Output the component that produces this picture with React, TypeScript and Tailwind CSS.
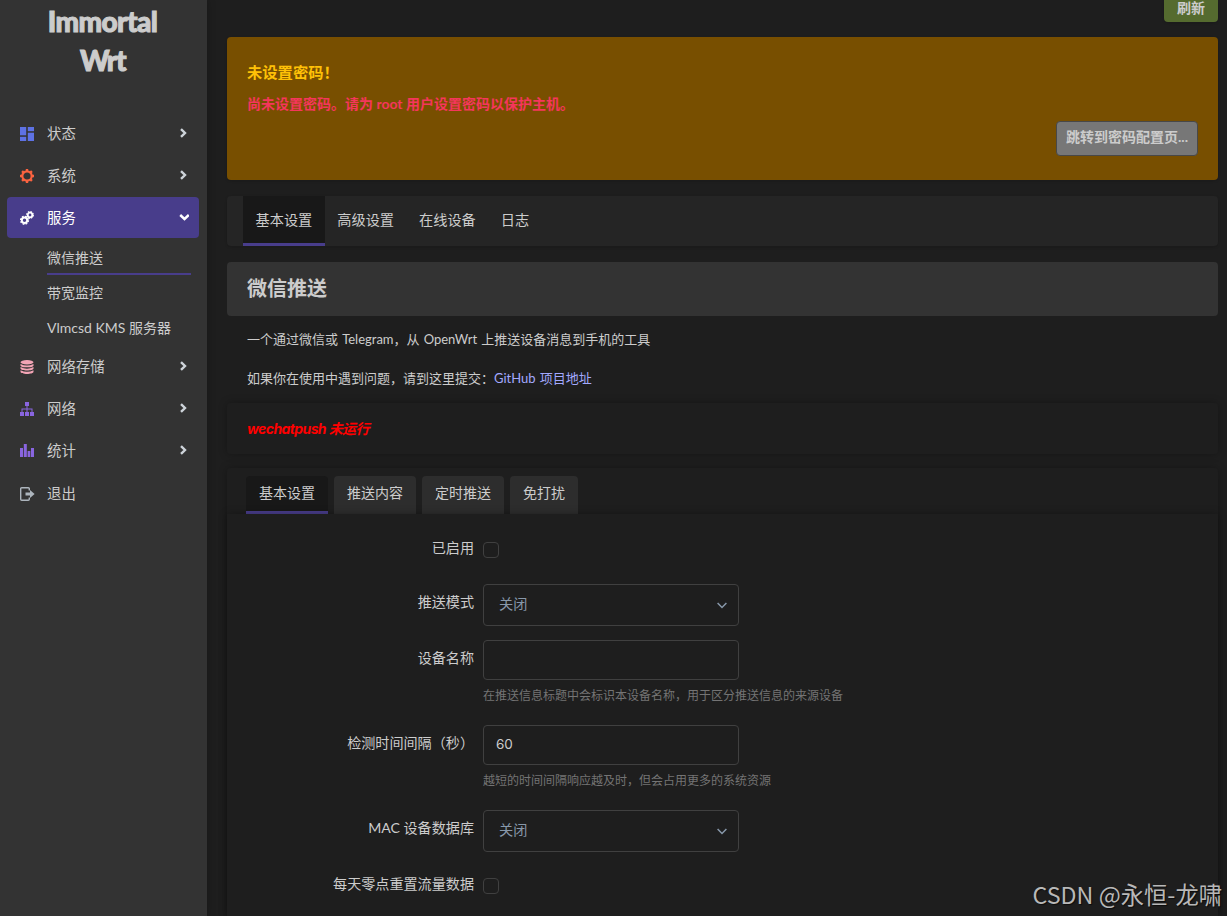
import type { ReactNode } from "react"

function DashboardIcon() {
  return (
    <svg width="14" height="14" viewBox="0 0 14 14" fill="#5e72e4">
      <rect width="6.2" height="8.3" />
      <rect x="7.8" width="6.2" height="4.2" />
      <rect y="9.8" width="6.2" height="4.2" />
      <rect x="7.8" y="5.7" width="6.2" height="8.3" />
    </svg>
  )
}

function GearIcon() {
  return (
    <svg width="14" height="14" viewBox="0 0 14 14" fill="none" stroke="#fb6340">
      <circle cx="7" cy="7" r="4.7" strokeWidth="2.2" />
      <path
        d="M7 0v2M7 12v2M0 7h2M12 7h2M2.05 2.05l1.4 1.4M10.55 10.55l1.4 1.4M2.05 11.95l1.4-1.4M10.55 3.45l1.4-1.4"
        strokeWidth="2.4"
      />
    </svg>
  )
}

function ServicesIcon() {
  return (
    <svg width="14" height="14" viewBox="0 0 14 14" fill="none" stroke="#fff">
      <circle cx="4.5" cy="9.3" r="2.7" strokeWidth="2" />
      <circle cx="4.5" cy="9.3" r="4" strokeWidth="1.2" strokeDasharray="1.8 1.34" />
      <circle cx="10" cy="4" r="2.3" strokeWidth="1.8" />
      <circle cx="10" cy="4" r="3.4" strokeWidth="1.1" strokeDasharray="1.6 1.07" />
    </svg>
  )
}

function DatabaseIcon() {
  return (
    <svg width="14" height="14" viewBox="0 0 14 14" fill="#f3a4b5">
      <ellipse cx="7" cy="2.2" rx="6.5" ry="2.2" />
      <path d="M.5 3.9Q7 7 13.5 3.9v1.5C13.5 8 .5 8 .5 5.4z" />
      <path d="M.5 7.1Q7 10.2 13.5 7.1v1.5C13.5 11.2 .5 11.2 .5 8.6z" />
      <path d="M.5 10.3Q7 13.4 13.5 10.3v1.5C13.5 14.7 .5 14.7 .5 11.8z" />
    </svg>
  )
}

function NetworkIcon() {
  return (
    <svg width="14" height="14" viewBox="0 0 14 14" fill="#8965e0">
      <rect x="5" width="4" height="4" />
      <path d="M6.5 4h1v2.5H12.5V10h-1V7.5h-4V10h-1V7.5h-4V10h-1V6.5H6.5z" />
      <rect y="10" width="4" height="4" />
      <rect x="5" y="10" width="4" height="4" />
      <rect x="10" y="10" width="4" height="4" />
    </svg>
  )
}

function StatsIcon() {
  return (
    <svg width="14" height="14" viewBox="0 0 14 14" fill="#8965e0">
      <rect y="4" width="3" height="9" />
      <rect x="3.8" width="3" height="13" />
      <rect x="7.6" y="7" width="2.7" height="6" />
      <rect x="11" y="4" width="3" height="9" />
    </svg>
  )
}

function LogoutIcon() {
  return (
    <svg width="15" height="14" viewBox="0 0 15 14" fill="none" stroke="#adb5bd" strokeWidth="1.4">
      <path d="M9.3 3.6V1.7Q9.3.7 8.3.7H1.7Q.7.7.7 1.7v10.6q0 1 1 1h6.6q1 0 1-1v-1.9" />
      <path d="M5.5 5.5H10V3L14.6 7 10 11V8.5H5.5z" fill="#adb5bd" stroke="none" />
    </svg>
  )
}

function Caret({ open = false }: { open?: boolean }) {
  return (
    <svg width="10" height="10" viewBox="0 0 10 10" fill="none" stroke={open ? "#fff" : "#ced4da"} strokeWidth="2.4">
      {open ? <path d="M1.2 3 5.5 7 9.8 3" /> : <path d="M2 1.1 6 5 2 8.9" />}
    </svg>
  )
}

type MenuItem = { label: string; icon: ReactNode; children?: string[]; leaf?: boolean }

const menu: MenuItem[] = [
  { label: "状态", icon: <DashboardIcon /> },
  { label: "系统", icon: <GearIcon /> },
  {
    label: "服务",
    icon: <ServicesIcon />,
    children: ["微信推送", "带宽监控", "Vlmcsd KMS 服务器"],
  },
  { label: "网络存储", icon: <DatabaseIcon /> },
  { label: "网络", icon: <NetworkIcon /> },
  { label: "统计", icon: <StatsIcon /> },
  { label: "退出", icon: <LogoutIcon />, leaf: true },
]

const pageTabs = ["基本设置", "高级设置", "在线设备", "日志"]
const sectionTabs = ["基本设置", "推送内容", "定时推送", "免打扰"]

function rowClass(m: MenuItem) {
  if (m.children) {
    return "mr-2 ml-[7px] flex h-[41px] items-center rounded-[4px] bg-[#483d8b] pr-[10px] pl-[13px] text-[14.4px] text-white"
  }
  if (m.leaf) return "mr-2 ml-[7px] flex h-[44px] items-center pr-[10px] pl-[13px] text-[14.4px]"
  return "mr-2 ml-[7px] flex h-[42px] items-center pr-[10px] pl-[13px] text-[14.4px]"
}

function Sidebar() {
  return (
    <aside className="w-[207px] shrink-0 bg-[#333] shadow-[0_0_8px_rgba(0,0,0,0.25)]">
      <div className="h-[113px] pt-[2px] pr-[2px] text-center font-['Lato',sans-serif] text-[28px] leading-[39px] font-black tracking-[-0.6px] text-[#ccc] [-webkit-text-stroke:1px_#ccc]">
        <div>Immortal</div>
        <div className="tracking-[-1.5px]">Wrt</div>
      </div>
      <nav>
        {menu.map((m) => (
          <div key={m.label}>
            <div className={rowClass(m)}>
              <span className="w-[27px]">{m.icon}</span>
              <span className="flex-1">{m.label}</span>
              {m.leaf ? null : (
                <span className="pb-[2px]">
                  <Caret open={!!m.children} />
                </span>
              )}
            </div>
            {m.children ? (
              <ul className="mb-[1px] pt-[2px] pr-4 pl-[47px] text-[14px]">
                {m.children.map((c, i) => (
                  <li
                    key={c}
                    className={
                      i === 0
                        ? "flex h-[35px] items-center border-b-2 border-[#483d8b] pt-[2px]"
                        : "flex h-[35px] items-center"
                    }
                  >
                    {c}
                  </li>
                ))}
              </ul>
            ) : null}
          </div>
        ))}
      </nav>
    </aside>
  )
}

type RowProps = { label: string; hint?: string; className: string; labelClass?: string; children: ReactNode }

function Row({ label, hint, className, labelClass = "pt-[8px]", children }: RowProps) {
  return (
    <div className={`flex ${className}`}>
      <label className={`mr-[9px] w-[247px] text-right text-[14.1px] leading-5 ${labelClass}`}>{label}</label>
      <div>
        {children}
        {hint ? <div className="mt-[7px] text-[12px] leading-[18px] text-[#747474]">{hint}</div> : null}
      </div>
    </div>
  )
}

function Select({ value }: { value: string }) {
  return (
    <div className="flex h-[42px] w-64 items-center justify-between rounded-[4px] border border-[#404040] pr-[11px] pb-[3px] pl-[15px] text-[14.2px] text-[#8898aa]">
      <span>{value}</span>
      <svg width="10" height="7" viewBox="0 0 10 7" fill="none" stroke="#8898aa" strokeWidth="1.5" className="mt-[3px]">
        <path d="M.6 1 5 5.5 9.4 1" />
      </svg>
    </div>
  )
}

function TextInput({ value = "" }: { value?: string }) {
  return (
    <input
      readOnly
      value={value}
      className="block h-10 w-64 rounded-[4px] border border-[#404040] bg-transparent px-3 pb-[3px] font-['Inter',sans-serif] text-[13.5px] outline-none"
    />
  )
}

function Checkbox() {
  return <div className="mt-[11px] size-4 rounded-[4px] border border-[#404040]" />
}

export default function App() {
  return (
    <div className="relative flex h-[916px] w-[1227px] overflow-hidden bg-[#1e1e1e] font-['Lato','Noto_Sans_CJK_SC',sans-serif] text-[14px] text-[#ccc]">
      <Sidebar />

      <main className="flex min-w-0 flex-1 flex-col pr-[9px] pl-5">
        <div className="flex h-[37px] justify-end">
          <button className="flex h-[22px] w-[54px] justify-center rounded-b-[4px] bg-[#556b2f] text-[14px] leading-[15px] font-bold shadow">
            刷新
          </button>
        </div>

        <div className="h-[143px] shrink-0 rounded-[4px] bg-[#784f00] px-5 pt-[23px] shadow">
          <h4 className="text-[15.3px] leading-6 font-bold text-[#ffc107]">未设置密码！</h4>
          <p className="mt-2 text-[14px] leading-6 font-bold text-[#f5365c]">
            尚未设置密码。请为 root 用户设置密码以保护主机。
          </p>
          <div className="mt-[5px] flex justify-end">
            <button className="h-[35px] w-[142px] rounded-[4px] border border-[#484848] bg-[#777] pb-[4px] text-[14px] font-bold whitespace-nowrap">
              跳转到密码配置页...
            </button>
          </div>
        </div>

        <ul className="mt-4 flex h-[50px] shrink-0 rounded-[4px] bg-[#252525] pl-4 text-[14.2px] shadow-sm">
          {pageTabs.map((t, i) => (
            <li
              key={t}
              className={
                i === 0
                  ? "border-b-[3px] border-[#483d8b] bg-[#181818] px-[12.5px] leading-[47px]"
                  : "px-[12.5px] leading-[47px]"
              }
            >
              {t}
            </li>
          ))}
        </ul>

        <h2 className="mt-4 h-[54px] shrink-0 rounded-[4px] bg-[#333] pl-5 text-[20px] leading-[53px] font-bold">微信推送</h2>

        <div className="h-[87px] shrink-0 px-5 pt-[4px] text-[13px] leading-[39px] [word-spacing:0.8px]">
          <p>一个通过微信或 Telegram，从 OpenWrt 上推送设备消息到手机的工具</p>
          <p>
            如果你在使用中遇到问题，请到这里提交：<a className="text-[#a3a9ff]">GitHub 项目地址</a>
          </p>
        </div>

        <div className="h-[51px] shrink-0 rounded-[4px] pl-5 font-['Inter','Noto_Sans_CJK_SC',sans-serif] text-[14px] leading-[52px] font-bold tracking-[-0.6px] text-[#f00] italic shadow-[0_0_8px_rgba(0,0,0,0.3)]">
          wechatpush 未运行
        </div>

        <section className="mt-[14px] flex flex-1 flex-col rounded-t-[4px] pt-2 shadow-[0_0_8px_rgba(0,0,0,0.3)]">
          <ul className="flex h-[38px] shrink-0 gap-[6px] pl-[19px]">
            {sectionTabs.map((t, i) => (
              <li
                key={t}
                className={
                  i === 0
                    ? "rounded-t-[4px] border-b-[3px] border-[#483d8b] bg-[#181818] px-[13px] leading-[34px]"
                    : "rounded-t-[4px] bg-[#2d2d2d] px-[13px] leading-[34px]"
                }
              >
                {t}
              </li>
            ))}
          </ul>

          <div className="flex-1 bg-[#1e1e1e] pt-[17px] shadow-[0_0_8px_rgba(0,0,0,0.3)]">
            <Row label="已启用" className="h-[53px]" labelClass="pt-[7px]">
              <Checkbox />
            </Row>
            <Row label="推送模式" className="h-[56px]">
              <Select value="关闭" />
            </Row>
            <Row label="设备名称" className="h-[85px]" hint="在推送信息标题中会标识本设备名称，用于区分推送信息的来源设备">
              <TextInput />
            </Row>
            <Row label="检测时间间隔（秒）" className="h-[85px]" hint="越短的时间间隔响应越及时，但会占用更多的系统资源">
              <TextInput value="60" />
            </Row>
            <Row label="MAC 设备数据库" className="h-[57px]">
              <Select value="关闭" />
            </Row>
            <Row label="每天零点重置流量数据" className="h-[49px]" labelClass="pt-[7px]">
              <Checkbox />
            </Row>
          </div>
        </section>
      </main>

      <div className="absolute right-[5px] bottom-[4px] font-['Noto_Sans_CJK_SC',sans-serif] text-[23.3px] leading-9 whitespace-nowrap text-[#b8b8b8] [text-shadow:1px_1px_1px_rgba(0,0,0,0.6)]">
        CSDN @永恒-龙啸
      </div>
    </div>
  )
}
